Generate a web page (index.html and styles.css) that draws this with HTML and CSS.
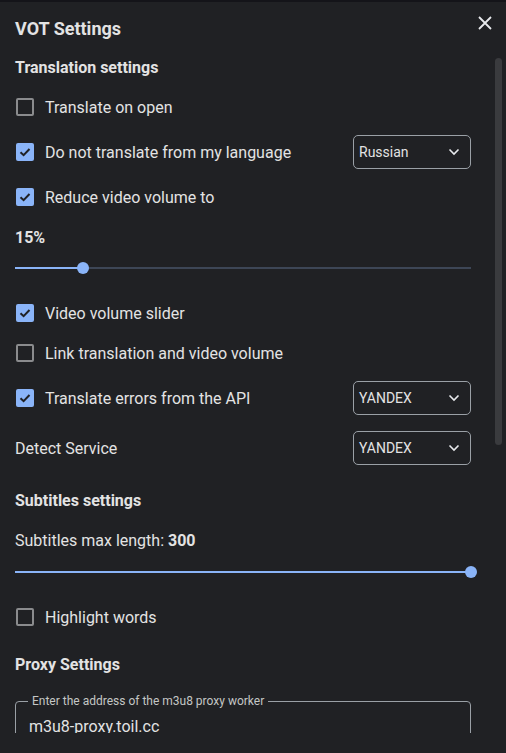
FILE: index.html
```html
<!DOCTYPE html>
<html>
<head>
<meta charset="utf-8">
<link rel="stylesheet" href="styles.css">
</head>
<body>
<div class="topstrip"></div>
<div class="dialog">
  <div class="header">
    <div class="title">VOT Settings</div>
    <button class="close" aria-label="Close">
      <svg width="16" height="16" viewBox="0 0 16 16"><path d="M2 2L14 14M14 2L2 14" stroke="#e8eaed" stroke-width="1.8" fill="none"/></svg>
    </button>
  </div>
  <div class="content">
    <div class="heading">Translation settings</div>
    <label class="row"><span class="cb"></span><span>Translate on open</span></label>
    <div class="row sel-row">
      <label class="row-l"><span class="cb on"><svg width="18" height="18" viewBox="0 0 18 18"><path d="M4.5 9.2L7.6 12.2L13.5 6" stroke="#202124" stroke-width="2" fill="none"/></svg></span><span>Do not translate from my language</span></label>
      <div class="select"><span>Russian</span><svg width="12" height="8" viewBox="0 0 12 8"><path d="M1.5 1.5L6 6L10.5 1.5" stroke="#e8eaed" stroke-width="1.6" fill="none"/></svg></div>
    </div>
    <label class="row"><span class="cb on"><svg width="18" height="18" viewBox="0 0 18 18"><path d="M4.5 9.2L7.6 12.2L13.5 6" stroke="#202124" stroke-width="2" fill="none"/></svg></span><span>Reduce video volume to</span></label>
    <div class="value m2 bold">15%</div>
    <div class="slider mn5"><div class="track"></div><div class="fill" style="width:15%"></div><div class="thumb" style="left:15%"></div></div>
    <label class="row m9"><span class="cb on"><svg width="18" height="18" viewBox="0 0 18 18"><path d="M4.5 9.2L7.6 12.2L13.5 6" stroke="#202124" stroke-width="2" fill="none"/></svg></span><span>Video volume slider</span></label>
    <label class="row"><span class="cb"></span><span>Link translation and video volume</span></label>
    <div class="row sel-row">
      <label class="row-l"><span class="cb on"><svg width="18" height="18" viewBox="0 0 18 18"><path d="M4.5 9.2L7.6 12.2L13.5 6" stroke="#202124" stroke-width="2" fill="none"/></svg></span><span>Translate errors from the API</span></label>
      <div class="select"><span>YANDEX</span><svg width="12" height="8" viewBox="0 0 12 8"><path d="M1.5 1.5L6 6L10.5 1.5" stroke="#e8eaed" stroke-width="1.6" fill="none"/></svg></div>
    </div>
    <div class="row sel-row">
      <span>Detect Service</span>
      <div class="select"><span>YANDEX</span><svg width="12" height="8" viewBox="0 0 12 8"><path d="M1.5 1.5L6 6L10.5 1.5" stroke="#e8eaed" stroke-width="1.6" fill="none"/></svg></div>
    </div>
    <div class="heading m9">Subtitles settings</div>
    <div class="value m2">Subtitles max length: <b>300</b></div>
    <div class="slider mn4"><div class="track"></div><div class="fill" style="width:100%"></div><div class="thumb" style="left:100%"></div></div>
    <label class="row m9"><span class="cb"></span><span>Highlight words</span></label>
    <div class="heading m9">Proxy Settings</div>
    <fieldset class="field">
      <legend>Enter the address of the m3u8 proxy worker</legend>
      <div class="input">m3u8-proxy.toil.cc</div>
    </fieldset>
    <div class="scrollbar"></div>
  </div>
</div>
</body>
</html>
```

FILE: styles.css
```css
* { box-sizing: border-box; }
html, body {
  margin: 0;
  padding: 0;
  background: #202124;
  height: 100%;
  overflow: hidden;
}
body {
  font-family: Roboto, "Liberation Sans", sans-serif;
  color: #e3e3e3;
  font-size: 16px;
}
.topstrip {
  height: 2px;
  background: #141419;
}
.dialog {
  position: relative;
}
.header {
  display: flex;
  justify-content: space-between;
  align-items: flex-start;
  padding: 16px 13px 0 15px;
}
.title {
  font-size: 18px;
  font-weight: 700;
  line-height: 22px;
  color: #e3e3e3;
}
.close {
  background: none;
  border: 0;
  padding: 0;
  margin-top: -3px;
  width: 16px;
  height: 16px;
  display: flex;
}
.content {
  position: relative;
  height: 693px;
  overflow: hidden;
  padding: 17px 35px 0 15px;
  display: flex;
  flex-direction: column;
  gap: 16px;
}
.heading {
  font-size: 16px;
  font-weight: 700;
  line-height: 22px;
  flex: none;
}
.row {
  display: flex;
  align-items: center;
  height: 24px;
  flex: none;
}
.row-l {
  display: flex;
  align-items: center;
}
.sel-row {
  height: 34px;
  justify-content: space-between;
}
.cb {
  width: 18px;
  height: 18px;
  margin-left: 1px;
  margin-right: 11px;
  border: 2px solid #8a8b8d;
  border-radius: 2px;
  flex: none;
  display: flex;
  align-items: center;
  justify-content: center;
}
.cb.on {
  background: #8ab4f8;
  border: 0;
}
.cb svg { display: block; }
.select {
  width: 118px;
  height: 34px;
  border: 1px solid #9aa0a6;
  border-radius: 5px;
  display: flex;
  align-items: center;
  justify-content: space-between;
  padding: 0 10px 0 5px;
  font-size: 14px;
  font-weight: 400;
  color: #e3e3e3;
}
.value {
  line-height: 22px;
  flex: none;
}
.bold { font-weight: 700; }
.value b { font-weight: 700; }
.m2 { margin-top: 2px; }
.m9 { margin-top: 9px; }
.mn5 { margin-top: -5px; }
.mn4 { margin-top: -4px; }
.slider {
  position: relative;
  height: 16px;
  flex: none;
}
.slider .track {
  position: absolute;
  left: 0;
  right: 0;
  top: 7px;
  height: 2px;
  background: #3d4656;
}
.slider .fill {
  position: absolute;
  left: 0;
  top: 7px;
  height: 2px;
  background: #8ab4f8;
}
.slider .thumb {
  position: absolute;
  top: 2px;
  width: 12px;
  height: 12px;
  margin-left: -6px;
  border-radius: 50%;
  background: #8ab4f8;
}
.field {
  margin: 2px 0 0 0;
  padding: 0 13px 10px;
  border: 1px solid #9aa0a6;
  border-radius: 4px;
  flex: none;
}
.field legend {
  font-size: 12px;
  line-height: 14px;
  padding: 0 4px;
  margin-left: -1px;
  color: #c4c7c5;
}
.input {
  margin-top: 9px;
  font-size: 16px;
  line-height: 20px;
  color: #e3e3e3;
}
.scrollbar {
  position: absolute;
  right: 4px;
  top: 18px;
  width: 7px;
  height: 387px;
  border-radius: 4px;
  background: #3a3b3e;
}
```
